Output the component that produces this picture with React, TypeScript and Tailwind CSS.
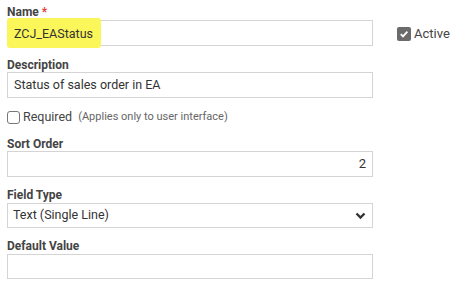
export default function App() {
  return (
    <div className="h-[296px] w-[468px] bg-white font-['Roboto',sans-serif] text-[#333]">
      <div className="flex">
        <div className="w-[366px] ml-[7px] pt-[5px]">
          <div className="h-[14px] text-[12px] leading-[14px] font-bold text-[#444]">
            Name <span className="text-[#e53935]">*</span>
          </div>
          <div className="relative mt-[1px] h-[26px] border border-[#d4d4d4] bg-white">
            <div className="absolute -left-[1px] -top-[3px] h-[30px] w-[94px] rounded-[3px] bg-[#fbf65a]" />
            <span className="relative pl-[6px] text-[12.5px] leading-[24px]">ZCJ_EAStatus</span>
          </div>

          <div className="mt-[12px] h-[14px] text-[12px] leading-[14px] font-bold text-[#444]">Description</div>
          <div className="h-[26px] border border-[#d4d4d4] pl-[6px] text-[12.5px] leading-[24px]">
            Status of sales order in EA
          </div>

          <div className="mt-[12px] flex h-[14px] items-center">
            <div className="h-[13px] w-[13px] rounded-[3px] border border-[#767676]" />
            <span className="ml-[3px] text-[12.5px] text-[#444]">Required</span>
            <span className="ml-[6px] text-[11px] text-[#666]">(Applies only to user interface)</span>
          </div>

          <div className="mt-[13px] h-[14px] text-[12px] leading-[14px] font-bold text-[#444]">Sort Order</div>
          <div className="h-[26px] border border-[#d4d4d4] pr-[6px] text-right text-[13px] leading-[24px]">2</div>

          <div className="mt-[11px] h-[14px] text-[12px] leading-[14px] font-bold text-[#444]">Field Type</div>
          <div className="mt-[1px] flex h-[25px] items-center justify-between border border-[#d4d4d4] pl-[5px] pr-[6px] text-[12.5px]">
            <span>Text (Single Line)</span>
            <svg width="11" height="8" viewBox="0 0 11 8">
              <path d="M1.5 1.5 L5.5 5.5 L9.5 1.5" fill="none" stroke="#333" strokeWidth="2.4" />
            </svg>
          </div>

          <div className="mt-[11px] h-[14px] text-[12px] leading-[14px] font-bold text-[#444]">Default Value</div>
          <div className="mt-[1px] h-[25px] border border-[#d4d4d4]" />
        </div>

        <div className="ml-[24px] mt-[27px] flex h-[14px] items-center">
          <div className="flex h-[14px] w-[14px] items-center justify-center rounded-[2px] bg-[#6b6b6b]">
            <svg width="10" height="10" viewBox="0 0 10 10">
              <path d="M1.8 5.2 L4 7.4 L8.4 2.6" fill="none" stroke="#fff" strokeWidth="1.8" />
            </svg>
          </div>
          <span className="ml-[3px] text-[13px] text-[#444]">Active</span>
        </div>
      </div>
    </div>
  )
}
